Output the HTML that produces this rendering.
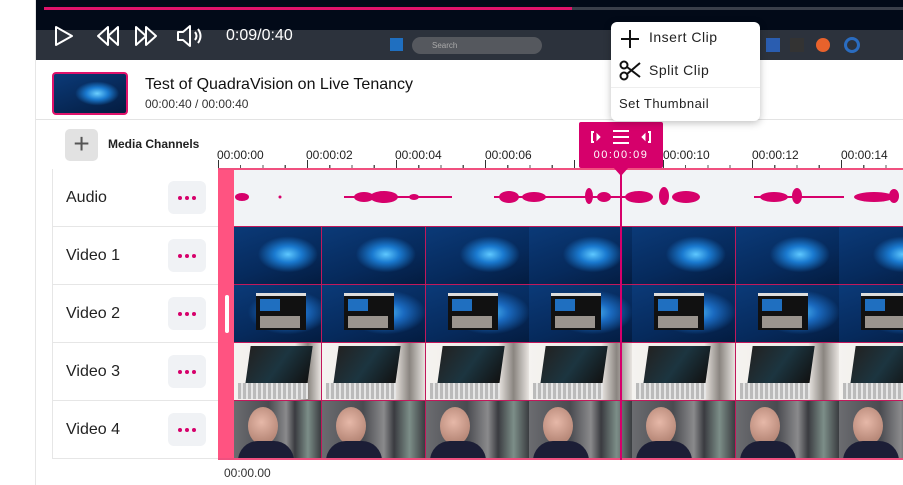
<!DOCTYPE html>
<html><head><meta charset="utf-8"><style>
*{margin:0;padding:0;box-sizing:border-box}
body{width:903px;height:485px;overflow:hidden;background:#fff;font-family:"Liberation Sans",Arial,sans-serif;position:relative;color:#222}
.abs{position:absolute}
.f{position:absolute;width:104px;height:57px;overflow:hidden;border-right:1px solid #c2185b}
.v1{background:radial-gradient(ellipse 30px 18px at 62% 48%,#5ec8ff,#1a7ad0 45%,rgba(10,60,130,0) 100%),linear-gradient(160deg,#0b3a78,#062a5c 60%,#041c40)}
.v2{background:radial-gradient(ellipse 40px 22px at 62% 48%,#4cb8f5,#1a6ac0 45%,rgba(10,60,130,0) 100%),linear-gradient(160deg,#0b3a78,#062a5c 60%,#041c40)}
.v2 i{position:absolute;left:22px;top:8px;width:50px;height:37px;background:#111;border-top:3px solid #ddd}
.v2 i:before{content:"";position:absolute;left:4px;top:3px;width:20px;height:12px;background:#1f6fc0}
.v2 i:after{content:"";position:absolute;left:4px;top:20px;width:40px;height:12px;background:#9a948e}
.v3{background:linear-gradient(90deg,#f5f3f0,#ece8e4 70%,#8a8580 85%,#e8e4e0)}
.v3 i{position:absolute;left:14px;top:3px;width:62px;height:38px;background:linear-gradient(120deg,#222,#1c3540 50%,#111);transform:skewX(-8deg)}
.v3 b{position:absolute;left:4px;top:40px;width:70px;height:16px;background:repeating-linear-gradient(90deg,#bbb 0 3px,#e6e6e6 3px 5px)}
.v4{background:linear-gradient(90deg,#6b6c70,#4a4b50 40%,#8a8a8c 60%,#3a3b40 70%,#7c8e88 85%,#3a3c40)}
.v4 i{position:absolute;left:14px;top:6px;width:30px;height:38px;border-radius:50%;background:radial-gradient(circle at 45% 40%,#e6b8a8,#b78878 70%)}
.v4 b{position:absolute;left:4px;top:40px;width:56px;height:20px;border-radius:20px 20px 0 0;background:#1c1e36}
.lab{position:absolute;left:52px;width:166px;height:58px;border-bottom:1px solid #e6e6e6;font-size:16px;padding-left:14px;line-height:57px;color:#222}
.dots{position:absolute;right:12px;top:12px;width:38px;height:33px;background:#f0f2f5;border-radius:6px;display:flex;justify-content:center;align-items:center;gap:3px}
.dots s{display:block;width:4px;height:4px;border-radius:50%;background:#d6006b}
.tk{position:absolute;top:148px;font-size:12px;color:#222}
</style></head><body>
<div class="abs" style="left:35px;top:0;width:1px;height:485px;background:#e6e6e6"></div>
<div class="abs" style="left:36px;top:0;width:867px;height:60px;background:#020a18"></div>
<div class="abs" style="left:36px;top:30px;width:867px;height:30px;background:#4a4d55;opacity:.6"></div>
<div class="abs" style="left:44px;top:7px;width:859px;height:3px;background:#3a3f4a"></div>
<div class="abs" style="left:44px;top:7px;width:528px;height:3px;background:#e0136b"></div>
<div class="abs" style="left:390px;top:38px;width:13px;height:13px;background:#1f6fc0"></div>
<div class="abs" style="left:412px;top:37px;width:130px;height:17px;border-radius:9px;background:#55585e;font-size:8px;color:#aaa;padding-left:20px;line-height:17px">Search</div>
<div class="abs" style="left:766px;top:38px;width:14px;height:14px;background:#2a5db0"></div>
<div class="abs" style="left:790px;top:38px;width:14px;height:14px;background:#333"></div>
<div class="abs" style="left:816px;top:38px;width:14px;height:14px;border-radius:50%;background:#e8622c"></div>
<div class="abs" style="left:844px;top:37px;width:16px;height:16px;border-radius:50%;border:3px solid #2a6cc0"></div>
<svg class="abs" style="left:50px;top:22px" width="260" height="28" viewBox="0 0 260 28">
 <g fill="none" stroke="#fff" stroke-width="2" stroke-linejoin="round">
  <path d="M6 5 L22 14 L6 23 Z"/>
  <path d="M58 5 L48 14 L58 23 Z M68 5 L58 14 L68 23 Z"/>
  <path d="M86 5 L96 14 L86 23 Z M96 5 L106 14 L96 23 Z"/>
  <path d="M128 10 L133 10 L140 4 L140 24 L133 18 L128 18 Z"/>
  <path d="M145 10 Q148 14 145 18 M148 7 Q153 14 148 21"/>
 </g>
</svg>
<div class="abs" style="left:226px;top:27px;font-size:16px;color:#fff">0:09/0:40</div>
<div class="abs" style="left:52px;top:72px;width:76px;height:43px;border:2px solid #e0136b;border-radius:4px;background:radial-gradient(ellipse 22px 12px at 60% 50%,#6cd0ff,#1a7ad0 50%,rgba(0,0,0,0)),linear-gradient(160deg,#0b3a78,#041c40)"></div>
<div class="abs" style="left:145px;top:76px;font-size:16px;color:#111">Test of QuadraVision on Live Tenancy</div>
<div class="abs" style="left:145px;top:97px;font-size:12px;color:#333">00:00:40 / 00:00:40</div>
<div class="abs" style="left:36px;top:119px;width:867px;height:1px;background:#e3e3e3"></div>
<div class="abs" style="left:65px;top:129px;width:33px;height:32px;background:#e2e2e2;border-radius:5px;font-size:28px;line-height:30px;text-align:center;color:#555">+</div>
<div class="abs" style="left:108px;top:137px;font-size:12px;font-weight:bold;color:#222">Media Channels</div>
<div class="tk" style="left:217px">00:00:00</div>
<div class="tk" style="left:306px">00:00:02</div>
<div class="tk" style="left:395px">00:00:04</div>
<div class="tk" style="left:485px">00:00:06</div>
<div class="tk" style="left:663px">00:00:10</div>
<div class="tk" style="left:752px">00:00:12</div>
<div class="tk" style="left:841px">00:00:14</div>
<div class="abs" style="left:218px;top:165px;width:685px;height:4px;background:repeating-linear-gradient(90deg,#555 0 1px,transparent 1px 22.25px)"></div>
<div class="abs" style="left:218px;top:160px;width:685px;height:9px;background:repeating-linear-gradient(90deg,#333 0 1px,transparent 1px 89px)"></div>
<div class="abs" style="left:52px;top:169px;width:1px;height:290px;background:#e6e6e6"></div>
<div class="lab" style="top:169px">Audio<div class="dots"><s></s><s></s><s></s></div></div>
<div class="lab" style="top:227px">Video 1<div class="dots"><s></s><s></s><s></s></div></div>
<div class="lab" style="top:285px">Video 2<div class="dots"><s></s><s></s><s></s></div></div>
<div class="lab" style="top:343px">Video 3<div class="dots"><s></s><s></s><s></s></div></div>
<div class="lab" style="top:401px">Video 4<div class="dots"><s></s><s></s><s></s></div></div>
<div class="abs" style="left:218px;top:168px;width:685px;height:292px;background:#fff;border-top:2px solid #f0507f;border-bottom:2px solid #f0507f"></div>
<div class="abs" style="left:234px;top:170px;width:669px;height:56px;background:#f1f3f6"></div>
<svg class="abs" style="left:234px;top:170px" width="669" height="56" viewBox="0 0 669 56" fill="#d6006b">
 <ellipse cx="8" cy="27" rx="7" ry="4"/><circle cx="46" cy="27" r="1.5"/>
 <ellipse cx="130" cy="27" rx="10" ry="5"/><ellipse cx="150" cy="27" rx="14" ry="6"/><rect x="110" y="26" width="108" height="2"/><ellipse cx="180" cy="27" rx="5" ry="3"/>
 <ellipse cx="275" cy="27" rx="10" ry="6"/><ellipse cx="300" cy="27" rx="12" ry="5"/><rect x="260" y="26" width="140" height="2"/><ellipse cx="355" cy="26" rx="4" ry="8"/><ellipse cx="370" cy="27" rx="7" ry="5"/>
 <ellipse cx="405" cy="27" rx="14" ry="6"/><ellipse cx="430" cy="26" rx="5" ry="9"/><ellipse cx="452" cy="27" rx="14" ry="6"/>
 <ellipse cx="540" cy="27" rx="14" ry="5"/><ellipse cx="563" cy="26" rx="5" ry="8"/><rect x="520" y="26" width="90" height="2"/>
 <ellipse cx="640" cy="27" rx="20" ry="5"/><ellipse cx="660" cy="26" rx="5" ry="7"/>
</svg>
<div class="abs" style="left:218px;top:170px;width:16px;height:288px;background:#ff5381"></div>
<div class="abs" style="left:225px;top:295px;width:4px;height:38px;background:#fff;border-radius:2px"></div>
<div class="abs" style="left:234px;top:226px;width:669px;height:232px;background:#c2185b"></div>

<div class="f v1" style="left:234px;top:227px;width:88px"></div>
<div class="f v1" style="left:322px;top:227px"></div>
<div class="f v1" style="left:426px;top:227px"></div>
<div class="f v1" style="left:529px;top:227px"></div>
<div class="f v1" style="left:632px;top:227px"></div>
<div class="f v1" style="left:736px;top:227px"></div>
<div class="f v1" style="left:839px;top:227px"></div>

<div class="f v2" style="left:234px;top:285px;width:88px"><i></i></div>
<div class="f v2" style="left:322px;top:285px"><i></i></div>
<div class="f v2" style="left:426px;top:285px"><i></i></div>
<div class="f v2" style="left:529px;top:285px"><i></i></div>
<div class="f v2" style="left:632px;top:285px"><i></i></div>
<div class="f v2" style="left:736px;top:285px"><i></i></div>
<div class="f v2" style="left:839px;top:285px"><i></i></div>

<div class="f v3" style="left:234px;top:343px;width:88px"><i></i><b></b></div>
<div class="f v3" style="left:322px;top:343px"><i></i><b></b></div>
<div class="f v3" style="left:426px;top:343px"><i></i><b></b></div>
<div class="f v3" style="left:529px;top:343px"><i></i><b></b></div>
<div class="f v3" style="left:632px;top:343px"><i></i><b></b></div>
<div class="f v3" style="left:736px;top:343px"><i></i><b></b></div>
<div class="f v3" style="left:839px;top:343px"><i></i><b></b></div>

<div class="f v4" style="left:234px;top:401px;width:88px"><i></i><b></b></div>
<div class="f v4" style="left:322px;top:401px"><i></i><b></b></div>
<div class="f v4" style="left:426px;top:401px"><i></i><b></b></div>
<div class="f v4" style="left:529px;top:401px"><i></i><b></b></div>
<div class="f v4" style="left:632px;top:401px"><i></i><b></b></div>
<div class="f v4" style="left:736px;top:401px"><i></i><b></b></div>
<div class="f v4" style="left:839px;top:401px"><i></i><b></b></div>

<div class="abs" style="left:620px;top:168px;width:2px;height:292px;background:#d6006b"></div>
<div class="abs" style="left:579px;top:122px;width:84px;height:46px;background:#d6006b;border-radius:2px"></div>
<div class="abs" style="left:613px;top:167px;width:0;height:0;border-left:8px solid transparent;border-right:8px solid transparent;border-top:9px solid #d6006b"></div>
<svg class="abs" style="left:579px;top:122px" width="84" height="30" viewBox="0 0 84 30" fill="none" stroke="#fff" stroke-width="2">
 <path d="M15 10 L13 10 L13 20 L15 20"/><path d="M18 12 L21 15 L18 18 Z" fill="#fff" stroke-width="1"/>
 <path d="M34 9 H50 M34 15 H50 M34 21 H50"/>
 <path d="M69 10 L71 10 L71 20 L69 20"/><path d="M66 12 L63 15 L66 18 Z" fill="#fff" stroke-width="1"/>
</svg>
<div class="abs" style="left:579px;top:149px;width:84px;text-align:center;font-size:11px;color:#fff;letter-spacing:1.5px">00:00:09</div>
<div class="abs" style="left:611px;top:22px;width:149px;height:99px;background:#fff;border-radius:6px;box-shadow:0 2px 8px rgba(0,0,0,.25)"></div>
<div class="abs" style="left:611px;top:87px;width:149px;height:1px;background:#eee"></div>
<svg class="abs" style="left:618px;top:27px" width="26" height="54" viewBox="0 0 26 54" fill="none" stroke="#111" stroke-width="2">
 <path d="M12 3 V21 M3 12 H21"/>
 <circle cx="6" cy="38" r="3.5"/><circle cx="6" cy="49" r="3.5"/><path d="M9 40 L22 50 M9 47 L22 36"/>
</svg>
<div class="abs" style="left:649px;top:29px;font-size:14px;color:#222;letter-spacing:.5px">Insert Clip</div>
<div class="abs" style="left:649px;top:62px;font-size:14px;color:#222;letter-spacing:.5px">Split Clip</div>
<div class="abs" style="left:619px;top:96px;font-size:13px;color:#222;letter-spacing:.5px">Set Thumbnail</div>
<div class="abs" style="left:224px;top:466px;font-size:12px;color:#333">00:00.00</div>
</body></html>
